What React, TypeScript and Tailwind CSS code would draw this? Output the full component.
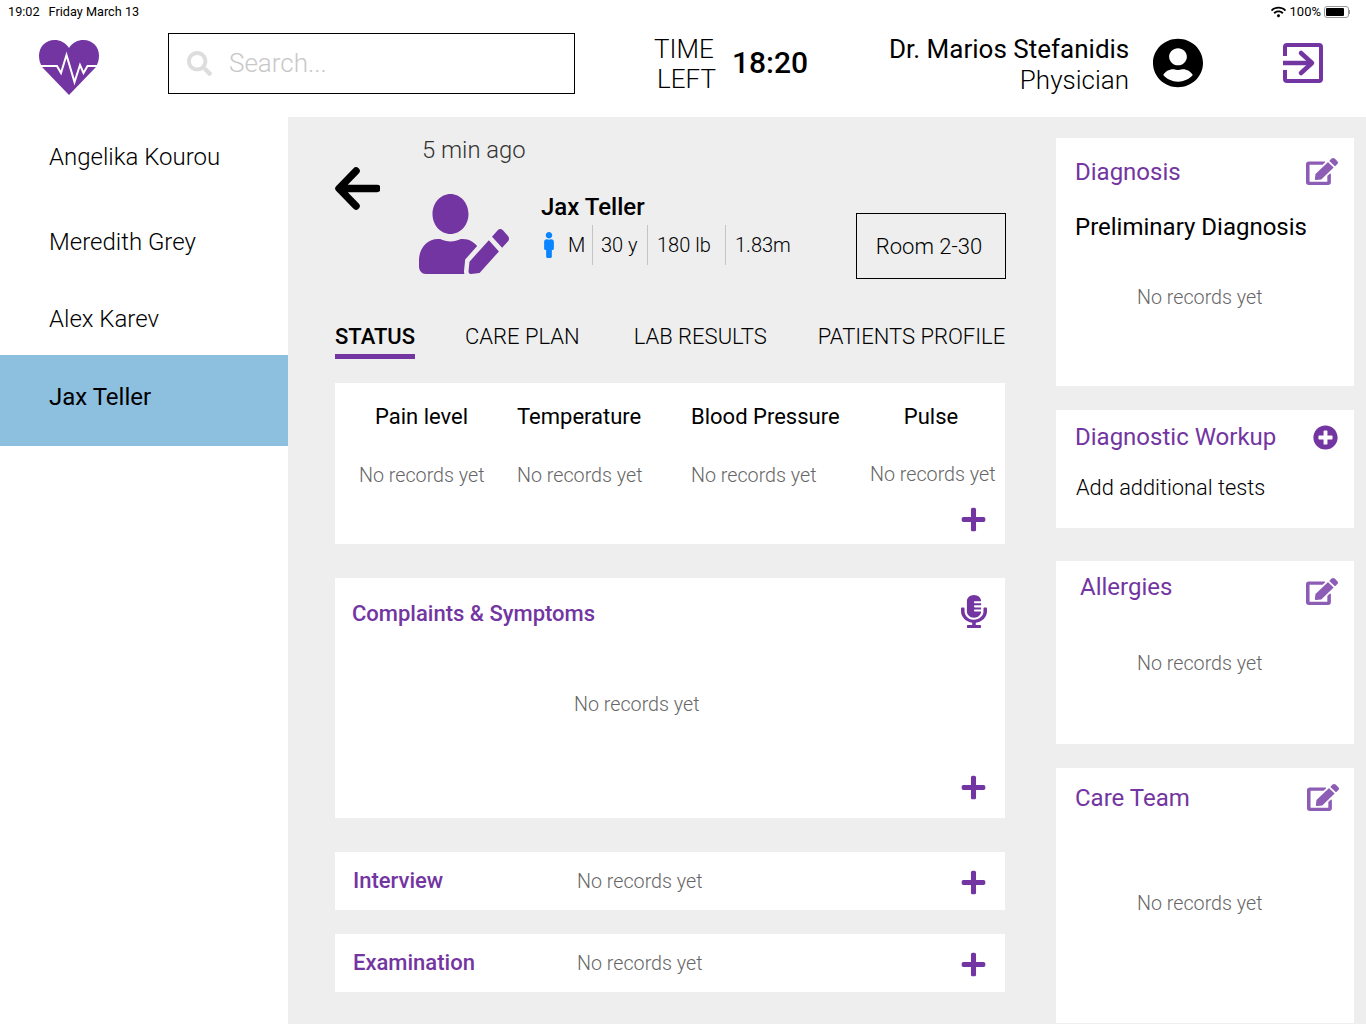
import React from 'react'
import {
  FaEdit,
  FaMale,
  FaMicrophoneAlt,
  FaPlus,
  FaPlusCircle,
  FaSearch,
  FaUserCircle,
  FaUserEdit,
  FaWifi,
} from 'react-icons/fa'

const purple = 'text-[#7335a1]'

const NoRecords = ({ className = '' }: { className?: string }) => (
  <div className={`whitespace-nowrap pt-[1px] text-[19.7px] leading-[26px] font-light text-[#666666] ${className}`}>
    No records yet
  </div>
)

const HeartLogo = () => (
  <svg width="60" height="55" viewBox="0 0 60 55" className="ml-[39px] mt-[16px] shrink-0">
    <path
      d="M30 8C26.5 2.5 21 0 15.5 0 6.5 0 0 7 0 15.5 0 20 1 23.5 3.5 27.5L30 55l26.5-27.5C59 23.5 60 20 60 15.5 60 7 53.5 0 44.5 0 39 0 33.5 2.5 30 8Z"
      fill="#7335a1"
    />
    <path
      d="M0 26H18L22 33 27.5 15 35.5 42 41 25 44.5 33 48.5 26H60"
      fill="none"
      stroke="#ffffff"
      strokeWidth="2"
    />
  </svg>
)

const LogoutIcon = () => (
  <svg width="40" height="40" viewBox="0 0 40 40" fill="none" stroke="#7335a1" strokeWidth="4">
    <path d="M2 13V4a2 2 0 0 1 2-2h32a2 2 0 0 1 2 2v32a2 2 0 0 1-2 2H4a2 2 0 0 1-2-2v-9" />
    <path d="M0 20h28" strokeWidth="4.5" />
    <path d="M18 10l11 10-11 10" strokeWidth="4.5" strokeLinecap="round" strokeLinejoin="round" />
  </svg>
)

const BackArrow = () => (
  <svg width="45" height="43" viewBox="0 0 45 43" fill="none" stroke="#000000" strokeWidth="7.5" className="shrink-0">
    <path d="M42 21.5H5M21 4L4 21.5 21 39" strokeLinecap="round" strokeLinejoin="round" />
  </svg>
)

const StatusBar = () => (
  <div className="flex h-6 items-center justify-between pl-2 pr-4 text-[12.7px] text-black">
    <div className="flex gap-[9px]">
      <span>19:02</span>
      <span>Friday March 13</span>
    </div>
    <div className="flex items-center gap-[3px]">
      <FaWifi className="h-[12px] w-[15px]" />
      <span className="ml-[1px] text-[13px]">100%</span>
      <div className="flex items-center">
        <div className="h-[12px] w-[25px] rounded-[3px] border border-[#999999] p-[1px]">
          <div className="h-full w-[18px] rounded-[1px] bg-black" />
        </div>
        <div className="h-[4px] w-[1px] bg-[#999999]" />
      </div>
    </div>
  </div>
)

const Header = () => (
  <div className="flex h-[93px] items-start">
    <HeartLogo />
    <div className="ml-[69px] mt-[9px] flex h-[61px] w-[407px] shrink-0 items-center border border-black pl-[18px]">
      <FaSearch className="h-[25px] w-[25px] text-[#dddddd]" />
      <span className="ml-[17px] text-[26px] font-light text-[#c8c8c8]">Search...</span>
    </div>
    <div className="ml-[79px] mt-[10px] w-[62px] shrink-0 text-right text-[26px] leading-[30px] font-light text-black">
      <div className="pr-[4px]">TIME</div>
      <div>LEFT</div>
    </div>
    <div className="ml-[16px] mt-[21px] w-[75px] shrink-0 whitespace-nowrap text-[30px] leading-[36px] font-medium text-black">
      18:20
    </div>
    <div className="ml-[82px] mt-[10px] w-[240px] shrink-0 whitespace-nowrap text-right text-[26px] leading-[31px] text-black">
      <div>Dr. Marios Stefanidis</div>
      <div className="font-light">Physician</div>
    </div>
    <FaUserCircle preserveAspectRatio="none" className="ml-[24px] mt-[14px] h-[50px] w-[50px] shrink-0 text-black" />
    <div className="ml-[80px] mt-[19px] shrink-0">
      <LogoutIcon />
    </div>
  </div>
)

const Sidebar = () => (
  <div className="w-[288px] shrink-0 text-[24px] leading-[30px] font-light text-black">
    <div className="pl-[49px] pt-[25px]">Angelika Kourou</div>
    <div className="pl-[49px] pt-[55px]">Meredith Grey</div>
    <div className="pl-[49px] pt-[47px]">Alex Karev</div>
    <div className="mt-[21px] bg-[#8dbfdf] pb-[34px] pl-[49px] pt-[27px] font-normal">Jax Teller</div>
  </div>
)

const PatientHeader = () => (
  <div>
    <div className="ml-[87px] pt-[17px] text-[23.8px] leading-[32px] font-light text-[#333333]">5 min ago</div>
    <div className="mt-[1px] flex items-start">
      <BackArrow />
      <FaUserEdit preserveAspectRatio="none" className={`ml-[39px] mt-[27px] h-[80px] w-[90px] shrink-0 ${purple}`} />
      <div className="ml-[32px] mt-[25px]">
        <div className="whitespace-nowrap text-[24px] leading-[30px] font-medium text-black">Jax Teller</div>
        <div className="mt-[3px] flex h-[40px] items-center whitespace-nowrap text-[20px] font-light text-black">
          <FaMale className="h-[26px] w-[16px] text-[#0a84ff]" />
          <span className="ml-[11px] w-[24px]">M</span>
          <span className="h-[40px] w-[1px] bg-[#c4c4c4]" />
          <span className="w-[54px] pl-[8px]">30 y</span>
          <span className="h-[40px] w-[1px] bg-[#c4c4c4]" />
          <span className="w-[77px] pl-[9px]">180 lb</span>
          <span className="h-[40px] w-[1px] bg-[#c4c4c4]" />
          <span className="pl-[9px]">1.83m</span>
        </div>
      </div>
      <div className="-mr-[1px] ml-auto mt-[46px] flex h-[66px] w-[150px] shrink-0 items-center justify-center border border-black pr-[4px] pt-[1px] text-[22px] font-light text-black">
        Room 2-30
      </div>
    </div>
  </div>
)

const Tabs = () => (
  <div className="mt-[42px] flex h-[38px] items-start whitespace-nowrap text-[22px] leading-[32px] font-light text-black">
    <div className="border-b-[5px] border-[#7335a1] pb-[1px] font-medium">STATUS</div>
    <div className="ml-[50px]">CARE PLAN</div>
    <div className="ml-[54px]">LAB RESULTS</div>
    <div className="ml-[51px]">PATIENTS PROFILE</div>
  </div>
)

const vitals = [
  { label: 'Pain level', className: 'ml-[24px] w-[125px] text-center', top: 'mt-[30px]', labelClass: '' },
  { label: 'Temperature', className: 'ml-[33px] w-[125px] text-left', top: 'mt-[30px]', labelClass: '' },
  { label: 'Blood Pressure', className: 'ml-[49px] w-[148px] text-left', top: 'mt-[30px]', labelClass: '' },
  { label: 'Pulse', className: 'ml-[31px] w-[125px] text-center', top: 'mt-[29px]', labelClass: 'pr-[3px]' },
]

const StatusCard = () => (
  <div className="mt-[24px] h-[161px] bg-white">
    <div className="flex pt-[19px]">
      {vitals.map((v) => (
        <div key={v.label} className={v.className}>
          <div className={`whitespace-nowrap text-[22px] leading-[30px] text-black ${v.labelClass}`}>{v.label}</div>
          <NoRecords className={v.top} />
        </div>
      ))}
    </div>
    <div className="flex justify-end pr-[18px] pt-[17px]">
      <FaPlus className={`h-[27px] w-[27px] ${purple}`} />
    </div>
  </div>
)

const ComplaintsCard = () => (
  <div className="mt-[34px] flex h-[240px] flex-col bg-white">
    <div className="flex items-start justify-between pl-[17px] pr-[18px] pt-[19px]">
      <div className={`text-[22px] leading-[34px] font-medium ${purple}`}>Complaints &amp; Symptoms</div>
      <FaMicrophoneAlt preserveAspectRatio="none" className={`-mt-[2px] h-[33px] w-[26px] ${purple}`} />
    </div>
    <NoRecords className="ml-[239px] mt-[60px]" />
    <div className="mt-auto flex justify-end pb-[17px] pr-[18px]">
      <FaPlus className={`h-[27px] w-[27px] ${purple}`} />
    </div>
  </div>
)

const RowCard = ({ title, className }: { title: string; className: string }) => (
  <div className={`flex h-[58px] items-center bg-white pl-[18px] pr-[18px] ${className}`}>
    <div className={`mb-[2px] w-[224px] text-[22px] font-medium ${purple}`}>{title}</div>
    <NoRecords className="mt-[1px]" />
    <FaPlus className={`ml-auto mt-[2px] h-[27px] w-[27px] ${purple}`} />
  </div>
)

const SideCard = ({
  title,
  height,
  className = '',
  titleClass,
  iconClass,
  children,
  icon,
}: {
  title: string
  height: string
  className?: string
  titleClass: string
  iconClass?: string
  children: React.ReactNode
  icon?: React.ReactNode
}) => (
  <div className={`bg-white ${height} ${className}`}>
    <div className="flex items-start justify-between pr-[16px]">
      <div className={`whitespace-nowrap text-[24px] leading-[32px] text-[#7335a1] ${titleClass}`}>{title}</div>
      {icon ?? <FaEdit preserveAspectRatio="none" className={`h-[27px] w-[32px] text-[#8d5db5] ${iconClass}`} />}
    </div>
    {children}
  </div>
)

const RightColumn = () => (
  <div className="ml-[50px] w-[298px] shrink-0 pt-[21px]">
    <SideCard title="Diagnosis" height="h-[248px]" titleClass="ml-[19px] mt-[18px]" iconClass="mt-[20px]">
      <div className="ml-[19px] mt-[23px] text-[24px] leading-[32px] text-black">Preliminary Diagnosis</div>
      <NoRecords className="ml-[81px] mt-[41px]" />
    </SideCard>
    <SideCard
      title="Diagnostic Workup"
      height="h-[118px]"
      className="mt-[24px]"
      titleClass="ml-[19px] mt-[11px]"
      icon={<FaPlusCircle className={`mt-[15px] h-[25px] w-[25px] ${purple}`} />}
    >
      <div className="ml-[20px] mt-[20px] text-[21.8px] leading-[30px] font-light text-black">Add additional tests</div>
    </SideCard>
    <SideCard title="Allergies" height="h-[183px]" className="mt-[33px]" titleClass="ml-[24px] mt-[10px]" iconClass="mt-[17px]">
      <NoRecords className="ml-[81px] mt-[45px]" />
    </SideCard>
    <SideCard title="Care Team" height="h-[255px]" className="mt-[24px]" titleClass="ml-[19px] mt-[14px]" iconClass="mt-[16px] -mr-[1px]">
      <NoRecords className="ml-[81px] mt-[76px]" />
    </SideCard>
  </div>
)

export default function App() {
  return (
    <div className="flex h-[1024px] w-[1366px] flex-col overflow-hidden bg-white font-['Roboto',sans-serif]">
      <StatusBar />
      <Header />
      <div className="flex min-h-0 flex-1">
        <Sidebar />
        <div className="flex flex-1 bg-[#eeeeee] pl-[47px]">
          <div className="w-[670px] shrink-0">
            <PatientHeader />
            <Tabs />
            <StatusCard />
            <ComplaintsCard />
            <RowCard title="Interview" className="mt-[34px]" />
            <RowCard title="Examination" className="mt-[24px]" />
          </div>
          <div className="ml-[1px]">
            <RightColumn />
          </div>
        </div>
      </div>
    </div>
  )
}
